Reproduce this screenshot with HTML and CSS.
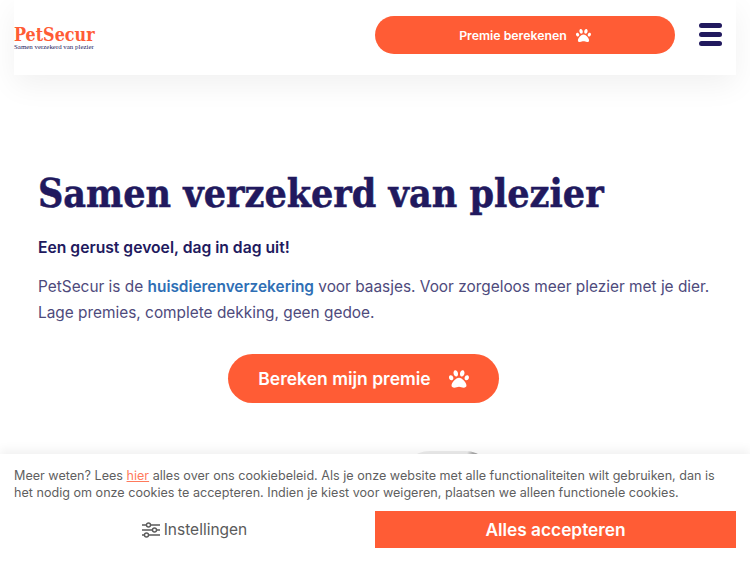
FILE: index.html
```html
<!DOCTYPE html>
<html lang="nl">
<head>
    <meta charset="UTF-8">
    <meta name="viewport" content="width=device-width, initial-scale=1.0">
    <title>PetSecur</title>
    <link rel="stylesheet" href="styles.css">
</head>
<body>
    <svg class="sprite" width="0" height="0">
        <symbol id="paw" viewBox="0 0 512 512">
            <path d="M256 224c-79 0-191 122-191 199 0 35 27 56 71 56 48 0 80-25 120-25 41 0 73 25 120 25 44 0 71-21 71-56 0-77-112-199-191-199zM108 212c-11-35-43-58-72-50-29 7-44 41-34 76s43 58 72 50c29-7 45-41 34-76zm84-21c31-8 46-50 35-93S185 26 154 34s-46 50-35 93 43 72 73 64zm282-29c-29-8-61 15-72 50-10 35 5 69 34 76 29 8 61-15 72-50 10-35-5-69-34-76zm-154 29c31 8 62-21 73-64s-4-85-35-93-62 21-73 64 4 85 35 93z"/>
        </symbol>
    </svg>

    <!-- Kop -->
    <header class="header">
        <div class="logo">
            <span class="logo-name">PetSecur</span>
            <span class="logo-tag">Samen verzekerd van plezier</span>
        </div>
        <a class="button button-small" href="#">
            Premie berekenen
            <svg class="paw paw-small"><use href="#paw"/></svg>
        </a>
        <div class="menu-icon">
            <span></span>
            <span></span>
            <span></span>
        </div>
    </header>

    <!-- Intro -->
    <main class="hero">
        <h1>Samen verzekerd van plezier</h1>
        <p class="lead">Een gerust gevoel, dag in dag uit!</p>
        <p class="intro">PetSecur is de <a href="#">huisdierenverzekering</a> voor baasjes. Voor zorgeloos meer plezier met je dier. Lage premies, complete dekking, geen gedoe.</p>
        <div class="hero-action">
            <a class="button button-large" href="#">
                Bereken mijn premie
                <svg class="paw paw-large"><use href="#paw"/></svg>
            </a>
        </div>
        <div class="hero-photo"></div>
    </main>

    <!-- Cookiemelding -->
    <div class="cookie-bar">
        <p>Meer weten? Lees <a href="#">hier</a> alles over ons cookiebeleid. Als je onze website met alle functionaliteiten wilt gebruiken, dan is het nodig om onze cookies te accepteren. Indien je kiest voor weigeren, plaatsen we alleen functionele cookies.</p>
        <div class="cookie-actions">
            <button class="cookie-settings">
                <svg class="sliders" viewBox="0 0 18 16" fill="none" stroke="currentColor" stroke-width="1.4">
                    <path d="M0 3h4.500M8.500 3H18M0 8h10.500M14.500 8H18M0 13h2.500M6.500 13H18"/>
                    <circle cx="6.500" cy="3" r="2"/>
                    <circle cx="12.500" cy="8" r="2"/>
                    <circle cx="4.500" cy="13" r="2"/>
                </svg>
                Instellingen
            </button>
            <button class="cookie-accept">Alles accepteren</button>
        </div>
    </div>
</body>
</html>
```

FILE: styles.css
```css
* {
    box-sizing: border-box;
}
html, body {
    height: 100%;
}
body {
    margin: 0;
    height: 563px;
    overflow: hidden;
    position: relative;
    font-family: "Inter", "Lato", sans-serif;
    background: white;
    color: #21195e;
}
a {
    text-decoration: none;
}
.sprite {
    display: block;
}
.header {
    height: 75px;
    margin: 0 14px;
    padding: 16px 14px 0 0;
    display: flex;
    align-items: flex-start;
    background: white;
    box-shadow: 0 10px 30px rgba(0, 0, 0, 0.06);
}
.logo {
    width: 361px;
    padding-top: 9px;
    display: flex;
    flex-direction: column;
}
.logo-name {
    font-family: "DejaVu Serif Condensed", "DejaVu Serif", serif;
    font-weight: bold;
    font-size: 17.800px;
    line-height: 19px;
    color: #ff5c35;
}
.logo-tag {
    font-family: "Liberation Serif", serif;
    font-size: 6.900px;
    line-height: 6px;
    color: #21195e;
}
.button {
    display: flex;
    align-items: center;
    justify-content: center;
    background-color: #ff5c35;
    color: white;
    font-weight: 600;
}
.button-small {
    width: 300px;
    height: 38px;
    border-radius: 19px;
    font-size: 12.300px;
    gap: 9px;
}
.button-large {
    width: 271px;
    height: 49px;
    border-radius: 25px;
    font-size: 17.500px;
    gap: 18px;
}
.paw {
    fill: white;
}
.paw-small {
    width: 15px;
    height: 15px;
}
.paw-large {
    width: 20px;
    height: 20px;
}
.menu-icon {
    margin: 7px 0 0 24px;
    width: 23px;
    display: flex;
    flex-direction: column;
    gap: 4px;
}
.menu-icon span {
    display: block;
    height: 5px;
    border-radius: 3px;
    background: #21195e;
}
.hero {
    padding: 90px 37px 0 38px;
}
h1 {
    margin: 0;
    font-family: "DejaVu Serif Condensed", "DejaVu Serif", serif;
    font-weight: bold;
    font-size: 39px;
    line-height: 56px;
    color: #21195e;
    -webkit-text-stroke: 0.5px #21195e;
}
.lead {
    margin: 14px 0 0;
    font-size: 15.700px;
    line-height: 26px;
    font-weight: 600;
}
.intro {
    margin: 13px 0 0;
    font-size: 15.400px;
    line-height: 26px;
    color: #4e4a7c;
}
.intro a {
    color: #2f6fb5;
    font-weight: 600;
}
.hero-action {
    margin-top: 28px;
    padding-left: 190px;
}
.hero-photo {
    margin: 48px 0 0 362px;
    width: 95px;
    height: 40px;
    border-radius: 30px 30px 0 0;
    background: radial-gradient(circle at 75px 3px, #aaa 0, #aaa 2px, transparent 8px), #eee;
}
.cookie-bar {
    position: absolute;
    left: 0;
    right: 0;
    bottom: 0;
    height: 109px;
    padding: 13px 14px 0;
    background: white;
    box-shadow: 0 -4px 10px rgba(0, 0, 0, 0.06);
}
.cookie-bar p {
    margin: 0;
    font-size: 12.600px;
    line-height: 17px;
    color: #5f5f5f;
}
.cookie-bar a {
    color: #ff7a5c;
    text-decoration: underline;
}
.cookie-actions {
    margin-top: 10px;
    display: grid;
    grid-template-columns: 361px 361px;
}
.cookie-actions button {
    height: 37px;
    border: none;
    font-family: inherit;
    cursor: pointer;
}
.cookie-settings {
    display: flex;
    align-items: center;
    justify-content: center;
    gap: 4px;
    background: none;
    font-size: 15.500px;
    color: #5a5a5a;
}
.sliders {
    width: 18px;
    height: 16px;
}
.cookie-accept {
    background-color: #ff5c35;
    color: white;
    font-size: 17.300px;
    font-weight: 600;
}
```
